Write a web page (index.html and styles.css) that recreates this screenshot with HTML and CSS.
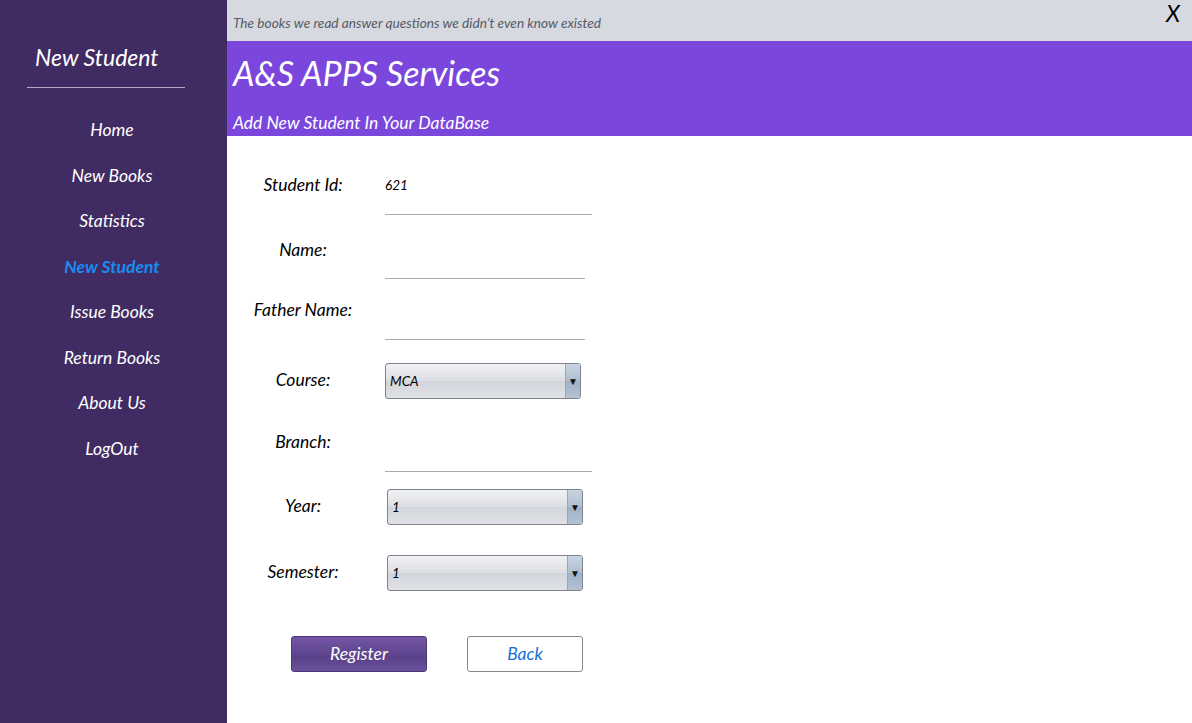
FILE: index.html
```html
<!DOCTYPE html>
<html>
<head>
<meta charset="utf-8">
<link rel="stylesheet" href="styles.css">
</head>
<body>
<div class="app">
  <aside class="sidebar">
    <div class="side-title">New Student</div>
    <nav class="nav">
      <div class="nav-item">Home</div>
      <div class="nav-item">New Books</div>
      <div class="nav-item">Statistics</div>
      <div class="nav-item active">New Student</div>
      <div class="nav-item">Issue Books</div>
      <div class="nav-item">Return Books</div>
      <div class="nav-item">About Us</div>
      <div class="nav-item">LogOut</div>
    </nav>
  </aside>
  <main class="main">
    <div class="topbar">
      <span class="quote">The books we read answer questions we didn’t even know existed</span>
      <span class="close">X</span>
    </div>
    <header class="header">
      <div class="title">A&amp;S APPS Services</div>
      <div class="subtitle">Add New Student In Your DataBase</div>
    </header>
    <section class="form">
      <div class="label l-tall">Student Id:</div>
      <div class="field f-id"><span class="value">621</span></div>

      <div class="label l-tall">Name:</div>
      <div class="field f-name"></div>

      <div class="label l-tall">Father Name:</div>
      <div class="field f-father"></div>

      <div class="label l-sel">Course:</div>
      <div class="select s-course"><span class="sel-text">MCA</span><span class="sel-arrow">▼</span></div>

      <div class="label l-tall">Branch:</div>
      <div class="field f-branch"></div>

      <div class="label l-sel">Year:</div>
      <div class="select s-shift"><span class="sel-text">1</span><span class="sel-arrow">▼</span></div>

      <div class="label l-sel">Semester:</div>
      <div class="select s-shift"><span class="sel-text">1</span><span class="sel-arrow">▼</span></div>

      <div class="buttons">
        <div class="btn btn-register">Register</div>
        <div class="btn btn-back">Back</div>
      </div>
    </section>
  </main>
</div>
</body>
</html>
```

FILE: styles.css
```css
* { box-sizing: border-box; }
html, body { margin: 0; padding: 0; }
body {
  width: 1192px;
  height: 723px;
  overflow: hidden;
  font-family: Lato, "Open Sans", sans-serif;
  font-style: italic;
  background: #ffffff;
}
.app {
  display: flex;
  height: 723px;
}
.sidebar {
  width: 227px;
  flex: none;
  background: #402b62;
  color: #ffffff;
  padding-top: 43px;
}
.side-title {
  margin-left: 27px;
  width: 158px;
  height: 45px;
  padding-left: 8px;
  font-size: 23px;
  line-height: 28px;
  border-bottom: 1px solid #b3abc4;
}
.nav {
  margin-top: 19px;
  display: flex;
  flex-direction: column;
}
.nav-item {
  height: 45.5px;
  line-height: 45.5px;
  text-align: center;
  font-size: 17.5px;
  padding-right: 3px;
}
.nav-item.active {
  color: #1a8cf0;
  font-weight: 700;
}
.main {
  flex: 1;
  display: flex;
  flex-direction: column;
}
.topbar {
  height: 41px;
  background: #d6d9e0;
  display: flex;
  justify-content: space-between;
  align-items: flex-start;
  padding: 0 12px 0 6px;
}
.quote {
  margin-top: 14px;
  font-size: 13.7px;
  line-height: 18px;
  color: #575b66;
}
.close {
  margin-top: 0;
  font-size: 23px;
  line-height: 26px;
  color: #000000;
}
.header {
  height: 95px;
  background: #7b46dc;
  color: #ffffff;
  padding-left: 6px;
}
.title {
  margin-top: 11px;
  font-size: 34px;
  line-height: 42px;
}
.subtitle {
  margin-top: 18px;
  font-size: 17.5px;
  line-height: 22px;
}
.form {
  padding: 29px 0 0 13px;
  display: grid;
  grid-template-columns: 126px 1fr;
  column-gap: 19px;
  grid-template-rows: 65px 60px 73px 59px 67px 66px 81px auto;
  align-items: start;
}
.label {
  text-align: center;
  font-size: 17.5px;
  color: #000000;
}
.l-tall { line-height: 40px; }
.l-sel { line-height: 34px; }
.field {
  border-bottom: 1px solid #a8aaae;
}
.f-id { width: 207px; height: 50px; }
.f-name { width: 200px; height: 49px; }
.f-father { width: 200px; height: 50px; }
.f-branch { width: 207px; height: 50px; }
.value {
  display: block;
  font-size: 13.5px;
  line-height: 40px;
  color: #000000;
}
.select {
  width: 196px;
  height: 36px;
  border: 1px solid #7d828c;
  border-radius: 3px;
  background: linear-gradient(#f1f2f5, #dcdee3 50%, #d2d5db 51%, #dfe1e6);
  display: flex;
  overflow: hidden;
}
.s-shift { margin-left: 2px; }
.sel-text {
  flex: 1;
  padding-left: 4px;
  font-size: 13.5px;
  line-height: 34px;
  color: #000000;
}
.sel-arrow {
  width: 15px;
  border-left: 1px solid #9aa6b5;
  background: linear-gradient(#c9d4e1, #aebed0 50%, #9fb2c7 51%, #b3c2d3);
  font-size: 10px;
  font-style: normal;
  line-height: 34px;
  text-align: center;
  color: #111111;
}
.buttons {
  grid-column: 1 / 3;
  display: flex;
  gap: 40px;
  padding-left: 51px;
}
.btn {
  height: 36px;
  border-radius: 3px;
  font-size: 17.5px;
  line-height: 34px;
  text-align: center;
}
.btn-register {
  width: 136px;
  border: 1px solid #4c3775;
  background: linear-gradient(#7356a4, #5f4590 50%, #5a4189 60%, #6c519e);
  color: #ffffff;
}
.btn-back {
  width: 116px;
  border: 1px solid #85878c;
  background: #ffffff;
  color: #1b6fd6;
}
```
